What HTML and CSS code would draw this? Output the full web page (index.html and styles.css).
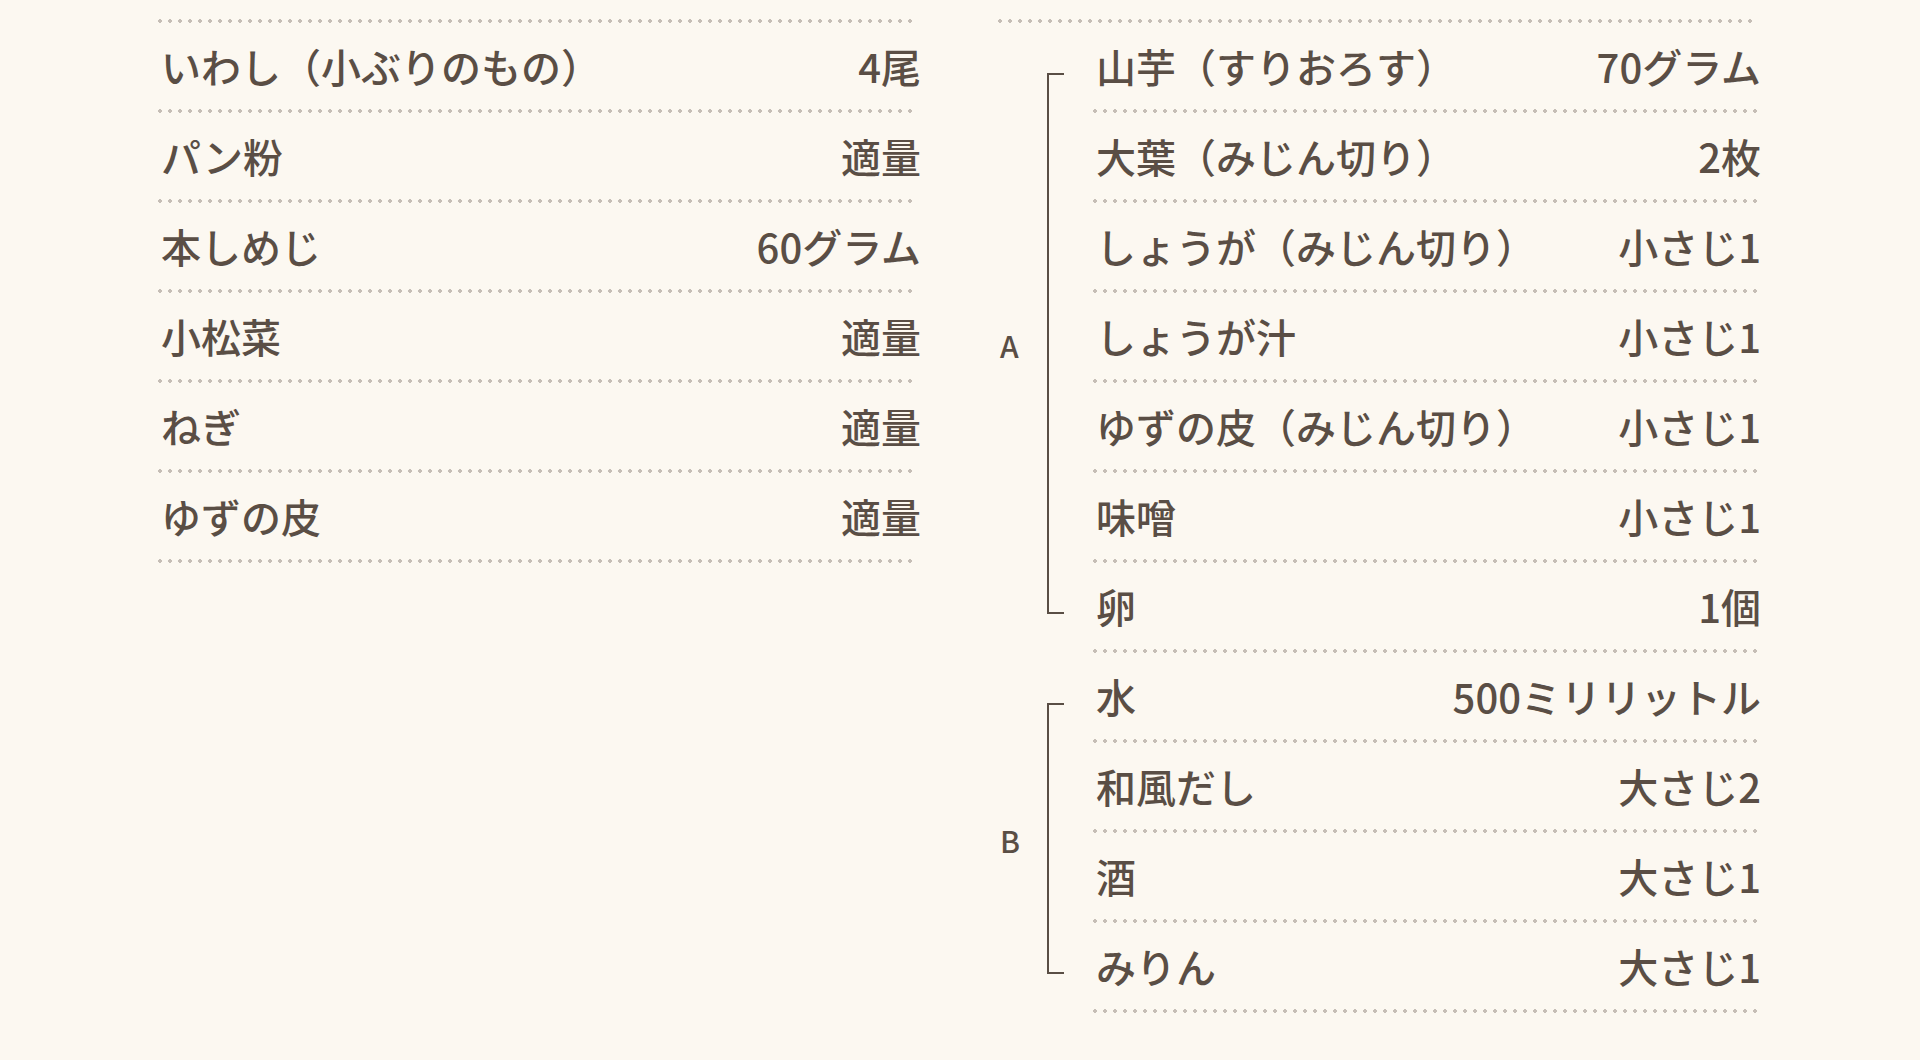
FILE: index.html
```html
<!DOCTYPE html>
<html lang="ja">
<head>
<meta charset="utf-8">
<title>材料</title>
<link rel="stylesheet" href="styles.css">
</head>
<body>
<div class="page">
  <div class="column">
    <ul class="rows">
      <li class="row"><span class="name">いわし（小ぶりのもの）</span><span class="amount">4尾</span></li>
      <li class="row"><span class="name">パン粉</span><span class="amount">適量</span></li>
      <li class="row"><span class="name">本しめじ</span><span class="amount">60グラム</span></li>
      <li class="row"><span class="name">小松菜</span><span class="amount">適量</span></li>
      <li class="row"><span class="name">ねぎ</span><span class="amount">適量</span></li>
      <li class="row"><span class="name">ゆずの皮</span><span class="amount">適量</span></li>
    </ul>
  </div>
  <div class="column">
    <div class="group">
      <div class="group-mark">
        <span class="group-label">A</span>
        <span class="bracket"></span>
      </div>
      <ul class="rows grouped">
        <li class="row"><span class="name">山芋（すりおろす）</span><span class="amount">70グラム</span></li>
        <li class="row"><span class="name">大葉（みじん切り）</span><span class="amount">2枚</span></li>
        <li class="row"><span class="name">しょうが（みじん切り）</span><span class="amount">小さじ1</span></li>
        <li class="row"><span class="name">しょうが汁</span><span class="amount">小さじ1</span></li>
        <li class="row"><span class="name">ゆずの皮（みじん切り）</span><span class="amount">小さじ1</span></li>
        <li class="row"><span class="name">味噌</span><span class="amount">小さじ1</span></li>
        <li class="row"><span class="name">卵</span><span class="amount">1個</span></li>
      </ul>
    </div>
    <div class="group">
      <div class="group-mark">
        <span class="group-label">B</span>
        <span class="bracket"></span>
      </div>
      <ul class="rows grouped">
        <li class="row"><span class="name">水</span><span class="amount">500ミリリットル</span></li>
        <li class="row"><span class="name">和風だし</span><span class="amount">大さじ2</span></li>
        <li class="row"><span class="name">酒</span><span class="amount">大さじ1</span></li>
        <li class="row"><span class="name">みりん</span><span class="amount">大さじ1</span></li>
      </ul>
    </div>
  </div>
</div>
</body>
</html>
```

FILE: styles.css
```css
html, body {
  margin: 0;
  padding: 0;
  background: #fcf8f1;
}

body {
  font-family: "Noto Sans CJK JP", "Noto Sans", sans-serif;
  color: #5a4e45;
  font-weight: 500;
}

.page {
  width: 1600px;
  margin: 0 auto;
  padding-top: 19px;
  display: grid;
  grid-template-columns: 760px 760px;
  column-gap: 80px;
  transform: translateX(-2px);
}

.column {
  padding-top: 4px;
  background-image: radial-gradient(circle at 2px 2px, #c6beb6 1.6px, transparent 2.1px);
  background-size: 10px 4px;
  background-repeat: repeat-x;
  background-position: left top;
}

.rows {
  list-style: none;
  margin: 0;
  padding: 0;
}

.row {
  box-sizing: border-box;
  height: 90px;
  padding: 0 0 4px 3px;
  display: flex;
  align-items: center;
  justify-content: space-between;
  font-size: 40px;
  line-height: 1;
  background-image: radial-gradient(circle at 2px 2px, #c6beb6 1.6px, transparent 2.1px);
  background-size: 10px 4px;
  background-repeat: repeat-x;
  background-position: left bottom;
}

.name {
  white-space: nowrap;
}

.amount {
  white-space: nowrap;
  text-align: right;
  margin-right: -3px;
}

.group {
  display: flex;
}

.group-mark {
  width: 66px;
  flex: none;
  display: flex;
  align-items: center;
  margin: 50px 29px 39px 0;
}

.group-label {
  width: 49px;
  padding-left: 2px;
  box-sizing: border-box;
  font-size: 30px;
  line-height: 1;
  position: relative;
  top: 1px;
}

.bracket {
  align-self: stretch;
  width: 15px;
  border: 2px solid #5a4e45;
  border-right: none;
}

.rows.grouped {
  flex: 1;
}
```
